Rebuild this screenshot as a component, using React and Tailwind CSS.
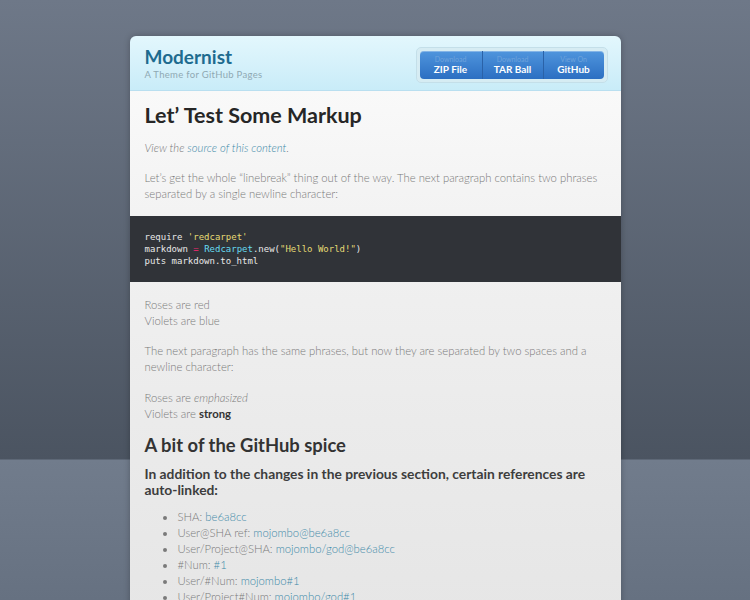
import React from "react";

const links = [
  { label: "SHA:", href: "be6a8cc" },
  { label: "User@SHA ref:", href: "mojombo@be6a8cc" },
  { label: "User/Project@SHA:", href: "mojombo/god@be6a8cc" },
  { label: "#Num:", href: "#1" },
  { label: "User/#Num:", href: "mojombo#1" },
  { label: "User/Project#Num:", href: "mojombo/god#1" },
  { label: "User/Project#Num:", href: "mojombo/god#1" },
];

const buttons = [
  { top: "Download", bottom: "ZIP File" },
  { top: "Download", bottom: "TAR Ball" },
  { top: "View On", bottom: "GitHub" },
];

export default function App() {
  return (
    <div
      className="h-[600px] overflow-hidden bg-[linear-gradient(to_bottom,#6e7888_0px,#4b5461_459px,#717c8c_460px,#667181_600px)] pt-[36px]"
      style={{ fontFamily: "Lato, 'Open Sans', sans-serif" }}
    >
      <div className="mx-auto w-[491px] rounded-t-[6px] overflow-hidden shadow-[0_0_6px_rgba(0,0,0,0.25)]">
        {/* ── header ─────────────────────────────────────────── */}
        <header className="h-[55px] flex items-center justify-between pl-[15px] pr-[13px] bg-[linear-gradient(to_bottom,#e3f7fd,#c9ecf8)] border-b border-[#b9dff0]">
          <div>
            <h1 className="text-[19px] leading-[22px] font-bold text-[#1e6b8f]">Modernist</h1>
            <p className="text-[9.5px] leading-[12px] tracking-[0.3px] text-[#8fa9b3] mt-[1px]">A Theme for GitHub Pages</p>
          </div>
          <div className="rounded-[5px] bg-[#d6ecf3] border border-[#c4dfe9] p-[3px] mt-[3px]">
            <div className="flex rounded-[4px] bg-[linear-gradient(to_bottom,#4f95dd,#2c6fc2)] shadow-[inset_0_1px_0_rgba(255,255,255,0.3)]">
              {buttons.map((b, i) => (
                <div
                  key={b.bottom}
                  className={`flex flex-col items-center justify-center h-[28px] ${
                    i === 0 ? "w-[62px]" : "w-[61px] border-l border-[#2a62a8]"
                  }`}
                >
                  <span className="text-[7px] leading-[8px] text-[#6ea3dc]">{b.top}</span>
                  <span className="text-[10px] leading-[12px] font-bold text-white">{b.bottom}</span>
                </div>
              ))}
            </div>
          </div>
        </header>

        {/* ── content ────────────────────────────────────────── */}
        <div className="bg-[linear-gradient(to_bottom,#f9f9f9_0px,#f0f0f0_180px,#ebebeb_330px,#e4e4e4_600px)] text-[11.3px] leading-[16px] text-[#7a7a7a] font-light pb-10">
          <div className="px-[15px] pt-[10px]">
            <h2 className="text-[21.5px] leading-[28px] font-bold text-[#262626]">Let’ Test Some Markup</h2>
            <p className="mt-[11px] italic">
              View the <span className="text-[#3f8aa8]">source of this content</span>.
            </p>
            <p className="mt-[14px]">
              Let’s get the whole “linebreak” thing out of the way. The next paragraph contains two phrases separated by a single newline character:
            </p>
          </div>

          <pre
            className="mt-[14px] bg-[#303338] text-[#e8e8e8] px-[15px] pt-[15px] pb-[15px] text-[9px] leading-[12px]"
            style={{ fontFamily: "'DejaVu Sans Mono', monospace" }}
          >
            {"require "}<span className="text-[#e6db74]">'redcarpet'</span>{"\n"}
            {"markdown "}<span className="text-[#f92672]">=</span>{" "}<span className="text-[#66d9ef]">Redcarpet</span>{".new("}<span className="text-[#e6db74]">"Hello World!"</span>{")\n"}
            {"puts markdown.to_html"}
          </pre>

          <div className="px-[15px] pt-[15px]">
            <p>
              Roses are red
              <br />
              Violets are blue
            </p>
            <p className="mt-[14px]">
              The next paragraph has the same phrases, but now they are separated by two spaces and a newline character:
            </p>
            <p className="mt-[15px]">
              Roses are <em>emphasized</em>
              <br />
              Violets are <strong className="font-bold text-[#333]">strong</strong>
            </p>
            <h3 className="mt-[11px] text-[18.4px] leading-[24px] font-bold text-[#333]">A bit of the GitHub spice</h3>
            <h4 className="mt-[9px] text-[13.8px] leading-[16px] font-bold text-[#3d3d3d]">
              In addition to the changes in the previous section, certain references are auto-linked:
            </h4>
            <ul className="mt-[11px] pl-[32px] list-disc">
              {links.map((l, i) => (
                <li key={i} className="pl-[1px]">
                  {l.label} <span className="text-[#3f8aa8]">{l.href}</span>
                </li>
              ))}
            </ul>
          </div>
        </div>
      </div>
    </div>
  );
}
